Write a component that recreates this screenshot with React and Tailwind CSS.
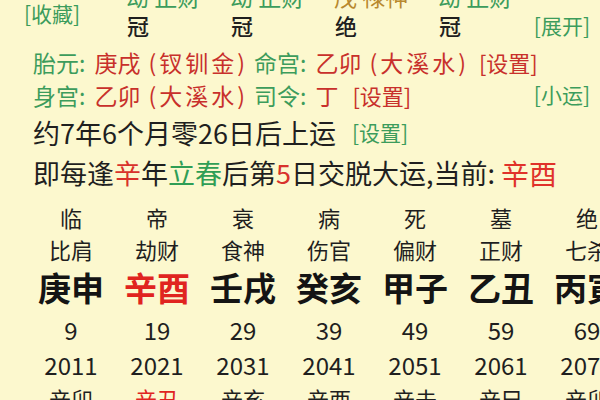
import React from 'react';

const pillars = [
  { top: '劫 正财', state: '冠', tone: 'text-[#3c9c5c]' },
  { top: '劫 正财', state: '冠', tone: 'text-[#3c9c5c]' },
  { top: '戊 禄神', state: '绝', tone: 'text-[#b8892e]' },
  { top: '劫 正财', state: '冠', tone: 'text-[#3c9c5c]' },
];

const yun = [
  { stage: '临', god: '比肩', gz: '庚申', age: 9, year: 2011, liu: '辛卯' },
  { stage: '帝', god: '劫财', gz: '辛酉', age: 19, year: 2021, liu: '辛丑', now: true },
  { stage: '衰', god: '食神', gz: '壬戌', age: 29, year: 2031, liu: '辛亥' },
  { stage: '病', god: '伤官', gz: '癸亥', age: 39, year: 2041, liu: '辛酉' },
  { stage: '死', god: '偏财', gz: '甲子', age: 49, year: 2051, liu: '辛未' },
  { stage: '墓', god: '正财', gz: '乙丑', age: 59, year: 2061, liu: '辛巳' },
  { stage: '绝', god: '七杀', gz: '丙寅', age: 69, year: 2071, liu: '辛卯' },
];

const green = 'text-[#3c9c5c]';
const red = 'text-[#c8302b]';

function App() {
  return (
    <div className="w-[600px] h-[400px] overflow-hidden bg-[#fcf8ce] text-[#1f1f1f] font-['Noto_Sans_CJK_SC','Noto_Sans',sans-serif]">
      {/* 四柱尾部 */}
      <div className="mt-[-20px] h-[65px] flex">
        <div className={`w-[86px] pl-[24px] pt-[22px] text-[21px] leading-[22px] whitespace-nowrap ${green}`}>[收藏]</div>
        {pillars.map((p, i) => (
          <div key={i} className="w-[104px] flex flex-col">
            <div className={`h-[32px] flex items-center pl-[40px] whitespace-nowrap text-[23px] leading-[24px] ${p.tone}`}>
              {p.top}
            </div>
            <div className="h-[26px] flex items-center justify-center text-[22px] leading-[24px] font-medium">{p.state}</div>
          </div>
        ))}
        <div className="flex-1 flex flex-col">
          <div className="h-[32px]" />
          <div className={`h-[26px] flex items-center justify-end pr-[10px] text-[21px] leading-[24px] ${green}`}>[展开]</div>
        </div>
      </div>

      {/* 胎元 命宫 */}
      <div className="h-[34px] flex items-center pl-[33px] text-[23px] whitespace-nowrap">
        <span className={green}>胎元:</span>
        <span className={`${red} ml-[9px]`}>庚戌</span>
        <span className={`${red} ml-[8px] tracking-[3px]`}>(钗钏金)</span>
        <span className={`${green} ml-[6px]`}>命宫:</span>
        <span className={`${red} ml-[9px]`}>乙卯</span>
        <span className={`${red} ml-[8px] tracking-[3px]`}>(大溪水)</span>
        <span className={`${red} ml-[10px] text-[22px]`}>[设置]</span>
      </div>

      {/* 身宫 司令 */}
      <div className="h-[32px] flex items-center pl-[33px] pr-[10px] text-[23px] whitespace-nowrap">
        <span className={green}>身宫:</span>
        <span className={`${red} ml-[9px]`}>乙卯</span>
        <span className={`${red} ml-[8px] tracking-[3px]`}>(大溪水)</span>
        <span className={`${green} ml-[6px]`}>司令:</span>
        <span className={`${red} ml-[9px]`}>丁</span>
        <span className={`${red} ml-[14px] text-[22px]`}>[设置]</span>
        <span className={`${green} ml-auto text-[21px]`}>[小运]</span>
      </div>

      {/* 起运 */}
      <div className="h-[44px] flex items-center pl-[33px] text-[27px] whitespace-nowrap">
        <span>约7年6个月零26日后上运</span>
        <span className={`${green} ml-[16px] text-[21px]`}>[设置]</span>
      </div>

      <div className="h-[36px] flex items-center pl-[33px] text-[27px] whitespace-nowrap">
        <span>即每逢</span>
        <span className="text-[#d8322b]">辛</span>
        <span>年</span>
        <span className="text-[#2f9e55]">立春</span>
        <span>后第</span>
        <span className="text-[#d8322b]">5</span>
        <span>日交脱大运,当前: </span>
        <span className="text-[#e0322a] ml-[6px] text-[28px]">辛酉</span>
      </div>

      {/* 大运 */}
      <div className="flex pl-[28px] pt-[8px] whitespace-nowrap">
        {yun.map((c, i) => (
          <div key={i} className="w-[86px] shrink-0 flex flex-col items-center">
            <div className="h-[36px] flex items-center text-[22px]">{c.stage}</div>
            <div className="h-[28px] flex items-center text-[22px]">{c.god}</div>
            <div className={`h-[50px] flex items-center text-[33px] font-bold ${c.now ? 'text-[#e0241f]' : 'text-[#141414]'}`}>
              {c.gz}
            </div>
            <div className="h-[34px] flex items-center text-[24px]">{c.age}</div>
            <div className="h-[36px] flex items-center text-[24px]">{c.year}</div>
            <div className={`h-[30px] flex items-center text-[22px] ${c.now ? 'text-[#e0241f]' : ''}`}>{c.liu}</div>
          </div>
        ))}
      </div>
    </div>
  );
}

export default App;
